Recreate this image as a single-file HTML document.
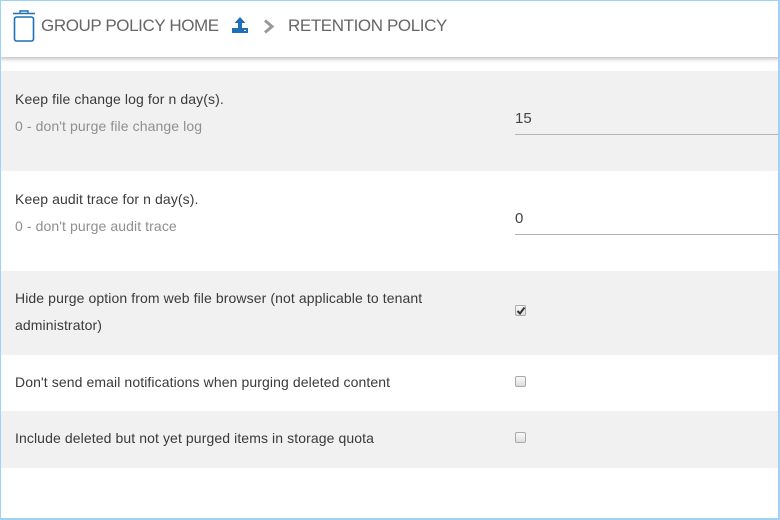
<!DOCTYPE html>
<html><head><style>
*{margin:0;padding:0;box-sizing:border-box}
body{width:780px;height:520px;background:#fff;font-family:"Liberation Sans",sans-serif;position:relative;overflow:hidden}
.frame{position:absolute;left:0;top:0;width:780px;height:520px;border:1px solid #9fd3f5;border-width:1px 2px 2px 1px;pointer-events:none;z-index:5}
.hdr{position:absolute;left:0;top:0;width:780px;height:57px;background:#fff;box-shadow:0 2px 4px rgba(0,0,0,.25);z-index:2}
.hdr span{position:absolute;top:16px;font-size:17px;color:#666;letter-spacing:-0.4px}
.row{position:absolute;left:0;width:780px}
.g{background:#f1f1f1}
.t{position:absolute;left:15px;font-size:14px;color:#3a3a3a;letter-spacing:0.1px}
.s{position:absolute;left:15px;font-size:14px;color:#8f8f8f;letter-spacing:0.1px}
.inp{position:absolute;left:515px;width:265px;border-bottom:1px solid #b5b5b5;font-size:15px;color:#444;height:25px}
.cb{position:absolute;left:515px;width:11px;height:11px;border:1px solid #aaa;border-radius:2px;background:linear-gradient(#fafafa,#ddd)}
</style></head><body>
<div class="hdr">
<svg style="position:absolute;left:12px;top:10px" width="24" height="33" viewBox="0 0 24 33"><path d="M1 3.5h22M8 3.5V1h8v2.5" stroke="#1f6fb8" stroke-width="1.4" fill="none"/><rect x="2.5" y="7" width="19" height="24" rx="2" stroke="#1f6fb8" stroke-width="1.6" fill="none"/></svg>
<span style="left:41px">GROUP POLICY HOME</span>
<svg style="position:absolute;left:231px;top:17px" width="18" height="16" viewBox="0 0 18 16"><path d="M9 0L3.5 6H7v5h4V6h3.5z" fill="#1f6fb8"/><rect x="1" y="11" width="16" height="5" fill="#1f6fb8"/><rect x="13" y="13" width="2" height="1" fill="#fff"/></svg>
<svg style="position:absolute;left:263px;top:19px" width="12" height="15" viewBox="0 0 12 15"><path d="M2 1.5l7 6-7 6" stroke="#999" stroke-width="3" fill="none"/></svg>
<span style="left:288px">RETENTION POLICY</span>
</div>
<div class="row g" style="top:71px;height:100px">
<div class="t" style="top:20px">Keep file change log for n day(s).</div>
<div class="s" style="top:47px">0 - don't purge file change log</div>
<div class="inp" style="top:39px">15</div>
</div>
<div class="row" style="top:171px;height:100px">
<div class="t" style="top:20px">Keep audit trace for n day(s).</div>
<div class="s" style="top:47px">0 - don't purge audit trace</div>
<div class="inp" style="top:39px">0</div>
</div>
<div class="row g" style="top:271px;height:84px">
<div class="t" style="line-height:27px;top:14px;width:440px">Hide purge option from web file browser (not applicable to tenant administrator)</div>
<div class="cb" style="top:34px"><svg style="position:absolute;left:0;top:0" width="10" height="10" viewBox="0 0 10 10"><path d="M1.5 5l2.5 2.5L8.5 1.5" stroke="#333" stroke-width="2" fill="none"/></svg></div>
</div>
<div class="row" style="top:355px;height:56px">
<div class="t" style="top:19px">Don't send email notifications when purging deleted content</div>
<div class="cb" style="top:21px"></div>
</div>
<div class="row g" style="top:411px;height:57px">
<div class="t" style="top:19px">Include deleted but not yet purged items in storage quota</div>
<div class="cb" style="top:21px"></div>
</div>
<div class="frame"></div>
</body></html>
